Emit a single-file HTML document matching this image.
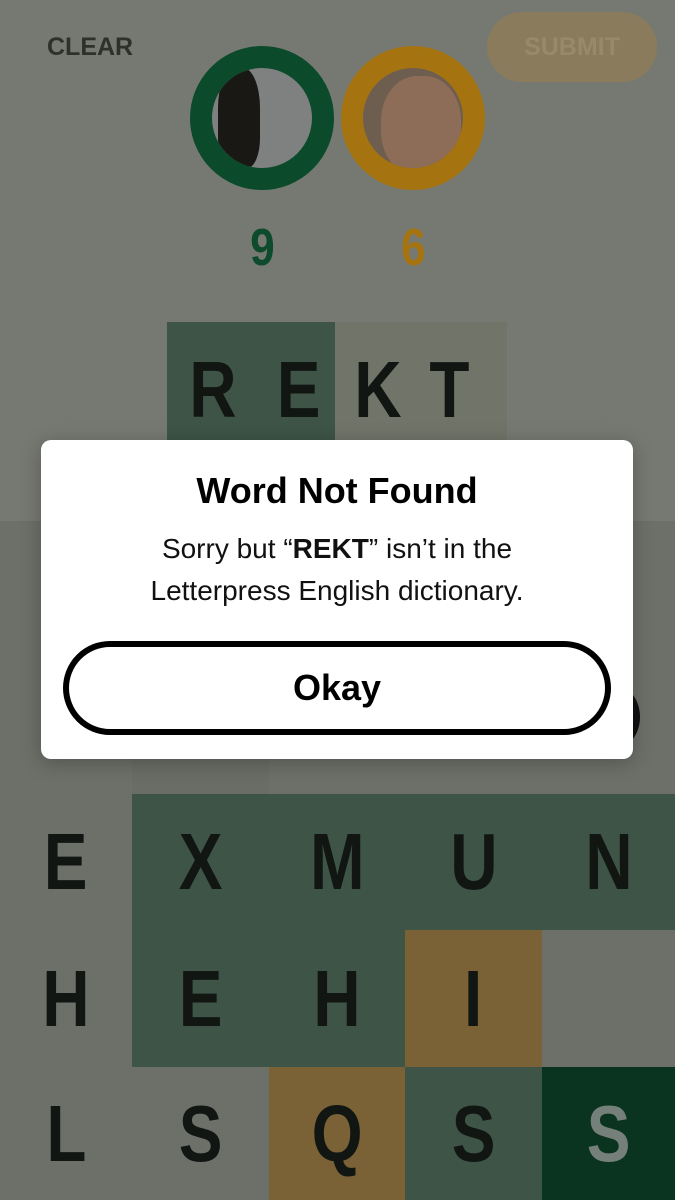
<!DOCTYPE html>
<html><head><meta charset="utf-8"><style>
*{margin:0;padding:0;box-sizing:border-box}
body{width:675px;height:1200px;background:#767971;position:relative;overflow:hidden;font-family:"Liberation Sans",sans-serif}
.a{position:absolute}
.t{position:absolute;display:flex;align-items:center;justify-content:center;font-weight:bold;font-size:80px;color:#111613}
.t span{display:inline-block;transform:scaleX(0.82)}
.g{background:#3e5447}.l{background:#6d7069}.o{background:#7a6236}.d{background:#0a3320}
</style></head><body>
<div class="a" style="left:47px;top:33px;font-size:25px;font-weight:bold;color:#2e302c">CLEAR</div>
<div class="a" style="left:487px;top:12px;width:170px;height:70px;border-radius:35px;background:#8a7b5c;color:#98896b;font-size:25px;font-weight:bold;display:flex;align-items:center;justify-content:center">SUBMIT</div>
<div class="a" style="left:190px;top:46px;width:144px;height:144px;border-radius:50%;border:22px solid #0b4a2a;background:#7f8080;overflow:hidden"><div class="a" style="left:6px;top:0;width:42px;height:100px;background:#1a1815;border-radius:40% 40% 30% 30%"></div></div>
<div class="a" style="left:341px;top:46px;width:144px;height:144px;border-radius:50%;border:22px solid #a57410;background:#6e5e50;overflow:hidden"><div class="a" style="left:18px;top:8px;width:80px;height:100px;background:#8e6d58;border-radius:45%"></div></div>
<div class="a" style="left:240px;top:218px;width:44px;text-align:center;font-size:52px;font-weight:bold;color:#0e4a2c"><span style="display:inline-block;transform:scaleX(.85)">9</span></div>
<div class="a" style="left:391px;top:218px;width:44px;text-align:center;font-size:52px;font-weight:bold;color:#a57410"><span style="display:inline-block;transform:scaleX(.85)">6</span></div>
<div class="t g" style="left:167px;top:322px;width:84px;height:135px;padding-left:8px"><span>R</span></div>
<div class="t g" style="left:251px;top:322px;width:84px;height:135px;padding-left:12px"><span>E</span></div>
<div class="t" style="left:335px;top:322px;width:86px;height:135px;background:#717469"><span>K</span></div>
<div class="t" style="left:421px;top:322px;width:86px;height:135px;background:#717469;padding-right:30px"><span>T</span></div>
<div class="a l" style="left:0;top:521px;width:675px;height:273px"></div>
<div class="a" style="left:132px;top:658px;width:137px;height:136px;background:#6a6d66"></div>
<div class="a" style="left:405px;top:521px;width:137px;height:137px;background:#72756e"></div>
<div class="t l" style="left:0;top:794px;width:132px;height:136px"><span>E</span></div>
<div class="t g" style="left:132px;top:794px;width:137px;height:136px"><span>X</span></div>
<div class="t g" style="left:269px;top:794px;width:136px;height:136px"><span>M</span></div>
<div class="t g" style="left:405px;top:794px;width:137px;height:136px"><span>U</span></div>
<div class="t g" style="left:542px;top:794px;width:133px;height:136px"><span>N</span></div>
<div class="t l" style="left:0;top:930px;width:132px;height:137px"><span>H</span></div>
<div class="t g" style="left:132px;top:930px;width:137px;height:137px"><span>E</span></div>
<div class="t g" style="left:269px;top:930px;width:136px;height:137px"><span>H</span></div>
<div class="t o" style="left:405px;top:930px;width:137px;height:137px"><span>I</span></div>
<div class="t l" style="left:542px;top:930px;width:133px;height:137px"></div>
<div class="t l" style="left:0;top:1067px;width:132px;height:133px"><span>L</span></div>
<div class="t l" style="left:132px;top:1067px;width:137px;height:133px"><span>S</span></div>
<div class="t o" style="left:269px;top:1067px;width:136px;height:133px"><span>Q</span></div>
<div class="t g" style="left:405px;top:1067px;width:137px;height:133px"><span>S</span></div>
<div class="t d" style="left:542px;top:1067px;width:133px;height:133px;color:#76807a"><span>S</span></div>
<div class="a" style="left:592px;top:686px;width:48px;height:62px;border-radius:50%;border:9px solid #111"></div>
<div class="a" style="left:41px;top:440px;width:592px;height:319px;background:#fff;border-radius:10px;box-shadow:0 4px 20px rgba(0,0,0,.25)">
<div class="a" style="left:0;top:30px;width:592px;text-align:center;font-size:36px;font-weight:bold;color:#000">Word Not Found</div>
<div class="a" style="left:0;top:88px;width:592px;text-align:center;font-size:28px;line-height:42px;color:#111">Sorry but “<b>REKT</b>” isn’t in the<br>Letterpress English dictionary.</div>
<div class="a" style="left:22px;top:201px;width:548px;height:94px;border:6px solid #000;border-radius:47px;display:flex;align-items:center;justify-content:center;font-size:36px;font-weight:bold;color:#000">Okay</div>
</div>
</body></html>
